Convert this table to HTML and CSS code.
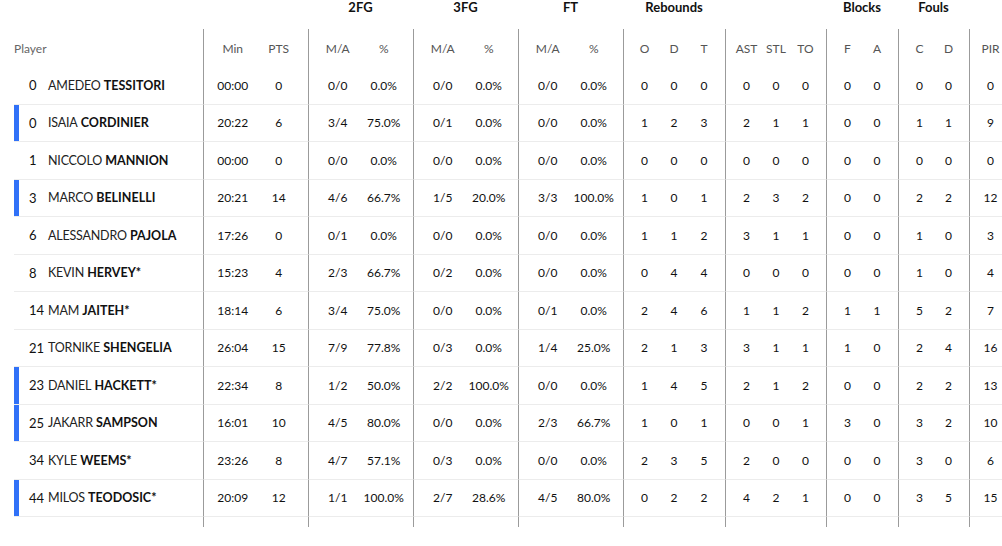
FILE: index.html
```html
<!DOCTYPE html>
<html>
<head>
<meta charset="utf-8">
<link rel="stylesheet" href="styles.css">
</head>
<body>
<div class="tbl">
  <div class="grp">
    <div></div>
    <div class="g2"></div>
    <div class="g2">2FG</div>
    <div class="g2">3FG</div>
    <div class="g2">FT</div>
    <div class="g3">Rebounds</div>
    <div class="g3"></div>
    <div class="g2">Blocks</div>
    <div class="g2">Fouls</div>
    <div></div>
  </div>
  <div class="hdr line">
    <div class="c player">Player</div>
    <div class="c s">Min</div><div class="c e">PTS</div>
    <div class="c s">M/A</div><div class="c e">%</div>
    <div class="c s">M/A</div><div class="c e">%</div>
    <div class="c s">M/A</div><div class="c e">%</div>
    <div class="c s">O</div><div class="c">D</div><div class="c e">T</div>
    <div class="c s">AST</div><div class="c">STL</div><div class="c e">TO</div>
    <div class="c s">F</div><div class="c e">A</div>
    <div class="c s">C</div><div class="c e">D</div>
    <div class="c s e">PIR</div>
  </div>

  <div class="row line">
    <div class="c player"><span class="num">0</span><span class="fn">AMEDEO</span>&nbsp;<span class="ln">TESSITORI</span></div>
    <div class="c s">00:00</div><div class="c e">0</div>
    <div class="c s">0/0</div><div class="c e">0.0%</div>
    <div class="c s">0/0</div><div class="c e">0.0%</div>
    <div class="c s">0/0</div><div class="c e">0.0%</div>
    <div class="c s">0</div><div class="c">0</div><div class="c e">0</div>
    <div class="c s">0</div><div class="c">0</div><div class="c e">0</div>
    <div class="c s">0</div><div class="c e">0</div>
    <div class="c s">0</div><div class="c e">0</div>
    <div class="c s e">0</div>
  </div>

  <div class="row line">
    <div class="c player on"><span class="num">0</span><span class="fn">ISAIA</span>&nbsp;<span class="ln">CORDINIER</span></div>
    <div class="c s">20:22</div><div class="c e">6</div>
    <div class="c s">3/4</div><div class="c e">75.0%</div>
    <div class="c s">0/1</div><div class="c e">0.0%</div>
    <div class="c s">0/0</div><div class="c e">0.0%</div>
    <div class="c s">1</div><div class="c">2</div><div class="c e">3</div>
    <div class="c s">2</div><div class="c">1</div><div class="c e">1</div>
    <div class="c s">0</div><div class="c e">0</div>
    <div class="c s">1</div><div class="c e">1</div>
    <div class="c s e">9</div>
  </div>

  <div class="row line">
    <div class="c player"><span class="num">1</span><span class="fn">NICCOLO</span>&nbsp;<span class="ln">MANNION</span></div>
    <div class="c s">00:00</div><div class="c e">0</div>
    <div class="c s">0/0</div><div class="c e">0.0%</div>
    <div class="c s">0/0</div><div class="c e">0.0%</div>
    <div class="c s">0/0</div><div class="c e">0.0%</div>
    <div class="c s">0</div><div class="c">0</div><div class="c e">0</div>
    <div class="c s">0</div><div class="c">0</div><div class="c e">0</div>
    <div class="c s">0</div><div class="c e">0</div>
    <div class="c s">0</div><div class="c e">0</div>
    <div class="c s e">0</div>
  </div>

  <div class="row line">
    <div class="c player on"><span class="num">3</span><span class="fn">MARCO</span>&nbsp;<span class="ln">BELINELLI</span></div>
    <div class="c s">20:21</div><div class="c e">14</div>
    <div class="c s">4/6</div><div class="c e">66.7%</div>
    <div class="c s">1/5</div><div class="c e">20.0%</div>
    <div class="c s">3/3</div><div class="c e">100.0%</div>
    <div class="c s">1</div><div class="c">0</div><div class="c e">1</div>
    <div class="c s">2</div><div class="c">3</div><div class="c e">2</div>
    <div class="c s">0</div><div class="c e">0</div>
    <div class="c s">2</div><div class="c e">2</div>
    <div class="c s e">12</div>
  </div>

  <div class="row line">
    <div class="c player"><span class="num">6</span><span class="fn">ALESSANDRO</span>&nbsp;<span class="ln">PAJOLA</span></div>
    <div class="c s">17:26</div><div class="c e">0</div>
    <div class="c s">0/1</div><div class="c e">0.0%</div>
    <div class="c s">0/0</div><div class="c e">0.0%</div>
    <div class="c s">0/0</div><div class="c e">0.0%</div>
    <div class="c s">1</div><div class="c">1</div><div class="c e">2</div>
    <div class="c s">3</div><div class="c">1</div><div class="c e">1</div>
    <div class="c s">0</div><div class="c e">0</div>
    <div class="c s">1</div><div class="c e">0</div>
    <div class="c s e">3</div>
  </div>

  <div class="row line">
    <div class="c player"><span class="num">8</span><span class="fn">KEVIN</span>&nbsp;<span class="ln">HERVEY*</span></div>
    <div class="c s">15:23</div><div class="c e">4</div>
    <div class="c s">2/3</div><div class="c e">66.7%</div>
    <div class="c s">0/2</div><div class="c e">0.0%</div>
    <div class="c s">0/0</div><div class="c e">0.0%</div>
    <div class="c s">0</div><div class="c">4</div><div class="c e">4</div>
    <div class="c s">0</div><div class="c">0</div><div class="c e">0</div>
    <div class="c s">0</div><div class="c e">0</div>
    <div class="c s">1</div><div class="c e">0</div>
    <div class="c s e">4</div>
  </div>

  <div class="row line">
    <div class="c player"><span class="num">14</span><span class="fn">MAM</span>&nbsp;<span class="ln">JAITEH*</span></div>
    <div class="c s">18:14</div><div class="c e">6</div>
    <div class="c s">3/4</div><div class="c e">75.0%</div>
    <div class="c s">0/0</div><div class="c e">0.0%</div>
    <div class="c s">0/1</div><div class="c e">0.0%</div>
    <div class="c s">2</div><div class="c">4</div><div class="c e">6</div>
    <div class="c s">1</div><div class="c">1</div><div class="c e">2</div>
    <div class="c s">1</div><div class="c e">1</div>
    <div class="c s">5</div><div class="c e">2</div>
    <div class="c s e">7</div>
  </div>

  <div class="row line">
    <div class="c player"><span class="num">21</span><span class="fn">TORNIKE</span>&nbsp;<span class="ln">SHENGELIA</span></div>
    <div class="c s">26:04</div><div class="c e">15</div>
    <div class="c s">7/9</div><div class="c e">77.8%</div>
    <div class="c s">0/3</div><div class="c e">0.0%</div>
    <div class="c s">1/4</div><div class="c e">25.0%</div>
    <div class="c s">2</div><div class="c">1</div><div class="c e">3</div>
    <div class="c s">3</div><div class="c">1</div><div class="c e">1</div>
    <div class="c s">1</div><div class="c e">0</div>
    <div class="c s">2</div><div class="c e">4</div>
    <div class="c s e">16</div>
  </div>

  <div class="row line">
    <div class="c player on"><span class="num">23</span><span class="fn">DANIEL</span>&nbsp;<span class="ln">HACKETT*</span></div>
    <div class="c s">22:34</div><div class="c e">8</div>
    <div class="c s">1/2</div><div class="c e">50.0%</div>
    <div class="c s">2/2</div><div class="c e">100.0%</div>
    <div class="c s">0/0</div><div class="c e">0.0%</div>
    <div class="c s">1</div><div class="c">4</div><div class="c e">5</div>
    <div class="c s">2</div><div class="c">1</div><div class="c e">2</div>
    <div class="c s">0</div><div class="c e">0</div>
    <div class="c s">2</div><div class="c e">2</div>
    <div class="c s e">13</div>
  </div>

  <div class="row line">
    <div class="c player on"><span class="num">25</span><span class="fn">JAKARR</span>&nbsp;<span class="ln">SAMPSON</span></div>
    <div class="c s">16:01</div><div class="c e">10</div>
    <div class="c s">4/5</div><div class="c e">80.0%</div>
    <div class="c s">0/0</div><div class="c e">0.0%</div>
    <div class="c s">2/3</div><div class="c e">66.7%</div>
    <div class="c s">1</div><div class="c">0</div><div class="c e">1</div>
    <div class="c s">0</div><div class="c">0</div><div class="c e">1</div>
    <div class="c s">3</div><div class="c e">0</div>
    <div class="c s">3</div><div class="c e">2</div>
    <div class="c s e">10</div>
  </div>

  <div class="row line">
    <div class="c player"><span class="num">34</span><span class="fn">KYLE</span>&nbsp;<span class="ln">WEEMS*</span></div>
    <div class="c s">23:26</div><div class="c e">8</div>
    <div class="c s">4/7</div><div class="c e">57.1%</div>
    <div class="c s">0/3</div><div class="c e">0.0%</div>
    <div class="c s">0/0</div><div class="c e">0.0%</div>
    <div class="c s">2</div><div class="c">3</div><div class="c e">5</div>
    <div class="c s">2</div><div class="c">0</div><div class="c e">0</div>
    <div class="c s">0</div><div class="c e">0</div>
    <div class="c s">3</div><div class="c e">0</div>
    <div class="c s e">6</div>
  </div>

  <div class="row line">
    <div class="c player on"><span class="num">44</span><span class="fn">MILOS</span>&nbsp;<span class="ln">TEODOSIC*</span></div>
    <div class="c s">20:09</div><div class="c e">12</div>
    <div class="c s">1/1</div><div class="c e">100.0%</div>
    <div class="c s">2/7</div><div class="c e">28.6%</div>
    <div class="c s">4/5</div><div class="c e">80.0%</div>
    <div class="c s">0</div><div class="c">2</div><div class="c e">2</div>
    <div class="c s">4</div><div class="c">2</div><div class="c e">1</div>
    <div class="c s">0</div><div class="c e">0</div>
    <div class="c s">3</div><div class="c e">5</div>
    <div class="c s e">15</div>
  </div>

  <div class="foot line">
    <div class="c"></div>
    <div class="c s"></div><div class="c"></div>
    <div class="c s"></div><div class="c"></div>
    <div class="c s"></div><div class="c"></div>
    <div class="c s"></div><div class="c"></div>
    <div class="c s"></div><div class="c"></div><div class="c"></div>
    <div class="c s"></div><div class="c"></div><div class="c"></div>
    <div class="c s"></div><div class="c"></div>
    <div class="c s"></div><div class="c"></div>
    <div class="c s"></div>
  </div>
</div>
</body>
</html>
```

FILE: styles.css
```css
html, body {
  margin: 0;
  padding: 0;
  background: #fff;
  overflow: hidden;
}

body {
  font-family: "Lato", "Liberation Sans", sans-serif;
  color: #111;
  width: 1002px;
  height: 546px;
}

.tbl {
  padding-left: 14px;
  width: 997px;
}

.grp,
.line {
  display: grid;
  grid-template-columns:
    189px
    52.5px 52.5px
    52.5px 52.5px
    52.5px 52.5px
    52.5px 52.5px
    36px 30px 36px
    36px 30px 35px
    36px 36px
    36px 35px
    42px;
}

.grp {
  height: 29px;
  font-size: 13px;
  font-weight: 700;
  line-height: 14px;
  color: #111;
}

.grp > div {
  text-align: center;
}

.grp .g2 {
  grid-column: span 2;
}

.grp .g3 {
  grid-column: span 3;
}

.c {
  box-sizing: border-box;
  display: flex;
  align-items: center;
  justify-content: center;
  white-space: nowrap;
}

.c.s {
  border-left: 1px solid #9b9b9b;
  padding-left: 6px;
}

.c.e {
  padding-right: 6px;
}

.hdr {
  height: 38px;
  padding-bottom: 1px;
  box-sizing: border-box;
  font-size: 12px;
  color: #555;
}

.hdr .c {
  margin-bottom: -1px;
}

.hdr .player {
  justify-content: flex-start;
  color: #666;
}

.row {
  height: 37.5px;
  font-size: 12px;
  color: #111;
}

.row > .c {
  border-bottom: 1px solid #ececec;
}

.row .player {
  justify-content: flex-start;
  padding-left: 15px;
  font-size: 12.5px;
}

.row .player.on {
  box-shadow: inset 5px 0 0 #3071f8;
}

.num {
  display: inline-block;
  width: 19px;
  font-weight: 400;
  font-size: 13px;
}

.fn {
  font-weight: 400;
  color: #222;
  letter-spacing: -0.2px;
}

.ln {
  font-weight: 700;
}

.foot {
  height: 10px;
}
```
